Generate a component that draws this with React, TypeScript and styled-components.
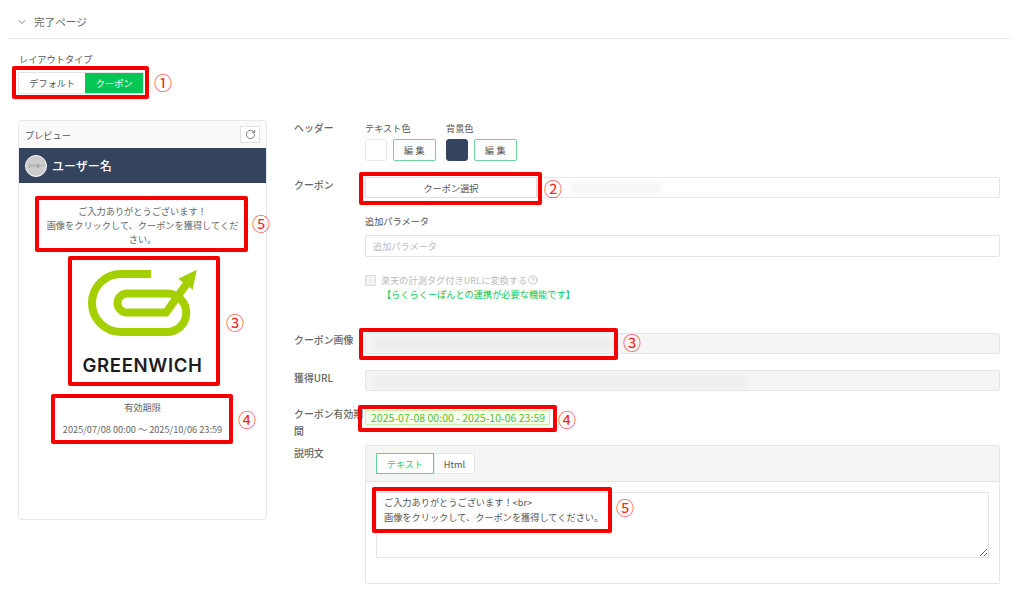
import React from "react";
import styled, { createGlobalStyle } from "styled-components";
import { ChevronDown, RotateCw, CircleHelp } from "lucide-react";

const Global = createGlobalStyle`
  html, body { margin: 0; padding: 0; background: #fff; }
  body { font-family: "Noto Sans CJK JP", "Noto Sans", sans-serif; color: #555; overflow: hidden; }
  * { box-sizing: border-box; }
`;

const Page = styled.div`
  position: relative;
  width: 1024px;
  height: 605px;
  overflow: hidden;
  font-size: 9.2px;
  line-height: 16px;
`;

const SectionBar = styled.div`
  height: 39px;
  margin: 0 14px 0 8px;
  padding: 6px 0 0 8px;
  display: flex;
  align-items: center;
  gap: 6px;
  border-bottom: 1px solid #e6e6e6;
  font-size: 10.6px;
  color: #666;
`;

const LayoutBlock = styled.div`
  padding: 12px 0 0 19px;
`;

const SmallLabel = styled.div`
  color: #555;
  line-height: 16px;
`;

const Toggle = styled.div`
  display: flex;
  width: 126px;
  height: 22px;
  margin: 5px 0 0 -1px;
  border: 1px solid #e4e4e4;
`;

const ToggleItem = styled.div<{ $on?: boolean; $w: number }>`
  width: ${(p) => p.$w}px;
  display: flex;
  align-items: center;
  justify-content: center;
  background: ${(p) => (p.$on ? "#06c755" : "#fff")};
  color: ${(p) => (p.$on ? "#fff" : "#555")};
`;

const Columns = styled.div`
  display: flex;
  margin-top: 26px;
  padding-left: 18px;
`;

const PreviewCard = styled.div`
  width: 249px;
  height: 400px;
  border: 1px solid #e8e8e8;
  border-radius: 3px;
  flex: none;
  overflow: hidden;
`;

const PreviewHead = styled.div`
  height: 27px;
  padding: 0 6px 0 6px;
  display: flex;
  align-items: center;
  justify-content: space-between;
  background: #fafafa;
`;

const IconButton = styled.div`
  width: 20px;
  height: 17px;
  display: flex;
  align-items: center;
  justify-content: center;
  background: #fff;
  border: 1px solid #e2e2e2;
  color: #555;
`;

const NavBar = styled.div`
  height: 35px;
  background: #34435e;
  display: flex;
  align-items: center;
  padding-left: 6px;
  gap: 5px;
  color: #fff;
  font-size: 12px;
  font-weight: 500;
`;

const Avatar = styled.div`
  width: 22px;
  height: 22px;
  border-radius: 50%;
  background: #ccc;
  border: 1.5px solid #fff;
  color: #666;
  font-size: 4px;
  font-weight: 400;
  display: flex;
  align-items: center;
  justify-content: center;
  white-space: nowrap;
  overflow: hidden;
`;

const PreviewBody = styled.div`
  padding: 21px 24px 0;
  text-align: center;
  line-height: 14px;
  color: #666;
`;

const LogoBox = styled.div`
  margin-top: 17px;
  display: flex;
  flex-direction: column;
  align-items: center;
`;

const LogoWord = styled.div`
  font-family: "Inter", "Liberation Sans", sans-serif;
  font-weight: 600;
  font-size: 18.6px;
  line-height: 20px;
  letter-spacing: 0.65px;
  color: #1c1c1c;
  margin-top: 16px;
`;

const Validity = styled.div`
  margin-top: 25px;
  white-space: nowrap;
`;

const ValidityDates = styled.div`
  margin-top: 8px;
`;

const Form = styled.div`
  margin-left: 27px;
  width: 706px;
`;

const Row = styled.div<{ $mt?: number }>`
  display: grid;
  grid-template-columns: 71px 1fr;
  margin-top: ${(p) => p.$mt ?? 0}px;
  color: #555;
`;

const RowLabel = styled.div<{ $mt?: number }>`
  margin-top: ${(p) => p.$mt ?? 0}px;
  font-size: 9.9px;
  line-height: 17px;
  font-weight: 500;
  color: #666;
`;

const ColorGroups = styled.div`
  display: flex;
  gap: 10px;
`;

const ColorGroup = styled.div``;

const ColorControls = styled.div`
  display: flex;
  gap: 6px;
  margin-top: 3px;
`;

const Swatch = styled.div<{ $c: string }>`
  width: 22px;
  height: 22px;
  border-radius: 3px;
  background: ${(p) => p.$c};
  border: 1px solid ${(p) => (p.$c === "#fff" ? "#e8e8e8" : p.$c)};
`;

const EditButton = styled.div`
  width: 43px;
  height: 22px;
  border: 1px solid #6fd69a;
  border-radius: 2px;
  display: flex;
  align-items: center;
  justify-content: center;
  letter-spacing: 2.5px;
  padding-left: 2px;
  color: #555;
  background: #fff;
`;

const CouponLine = styled.div`
  display: flex;
  height: 21px;
`;

const SelectButton = styled.div`
  width: 172px;
  flex: none;
  display: flex;
  align-items: center;
  justify-content: center;
  border: 1px solid #e0e0e0;
  background: #fff;
  color: #555;
`;

const Field = styled.div<{ $disabled?: boolean }>`
  flex: 1;
  height: 21px;
  display: flex;
  align-items: center;
  padding-left: 7px;
  border: 1px solid #e6e6e6;
  border-radius: 2px;
  background: ${(p) => (p.$disabled ? "#f5f5f5" : "#fff")};
  overflow: hidden;
`;

const Smudge = styled.div<{ $w: number; $ml?: number; $c?: string }>`
  width: ${(p) => p.$w}px;
  height: 12px;
  margin-left: ${(p) => p.$ml ?? 0}px;
  background: ${(p) => p.$c ?? "#ededed"};
  filter: blur(2px);
`;

const SubLabel = styled.div`
  margin-top: 15px;
  height: 16px;
`;

const TextInput = styled.input`
  display: block;
  width: 100%;
  height: 22px;
  margin-top: 6px;
  padding: 0 7px;
  border: 1px solid #e4e4e4;
  border-radius: 2px;
  font: inherit;
  outline: none;
  &::placeholder { color: #bdbdbd; opacity: 1; }
`;

const CheckLine = styled.div`
  display: flex;
  align-items: center;
  gap: 5px;
  height: 16px;
  margin-top: 15px;
  color: #bbb;
`;

const Check = styled.div`
  width: 11px;
  height: 11px;
  background: #f2f2f2;
  border: 1px solid #dcdcdc;
  border-radius: 1px;
`;

const CheckText = styled.span`
  display: inline-flex;
  align-items: center;
  gap: 1px;
`;

const GreenNote = styled.div`
  color: #06c755;
  margin: -2px 0 0 17px;
  font-size: 9.2px;
`;

const DateTag = styled.div`
  display: block;
  width: 185px;
  height: 15px;
  line-height: 13px;
  font-size: 10.55px;
  padding-left: 5px;
  white-space: nowrap;
  color: #62bb30;
  background: #f6ffed;
  border: 1px solid #c6eda6;
  border-radius: 1px;
`;

const Panel = styled.div`
  height: 139px;
  border: 1px solid #e6e6e6;
  border-radius: 2px;
`;

const PanelHead = styled.div`
  height: 36px;
  background: #f5f5f5;
  border-bottom: 1px solid #e6e6e6;
  padding: 7px 0 0 10px;
  display: flex;
`;

const Tab = styled.div<{ $on?: boolean; $w: number }>`
  width: ${(p) => p.$w}px;
  height: 21px;
  display: flex;
  align-items: center;
  justify-content: center;
  background: #fff;
  border: 1px solid ${(p) => (p.$on ? "#5fd492" : "#e6e6e6")};
  color: ${(p) => (p.$on ? "#2ecb73" : "#555")};
`;

const Area = styled.textarea`
  display: block;
  width: 613px;
  height: 66px;
  margin: 10px 0 0 10px;
  padding: 2px 7px;
  border: 1px solid #e4e4e4;
  border-radius: 1px;
  font: inherit;
  line-height: 15px;
  color: #555;
  resize: vertical;
  outline: none;
`;

const RedBox = styled.div<{ $x: number; $y: number; $w: number; $h: number }>`
  position: absolute;
  left: ${(p) => p.$x}px;
  top: ${(p) => p.$y}px;
  width: ${(p) => p.$w}px;
  height: ${(p) => p.$h}px;
  border: 4px solid #f50000;
  border-radius: 2px;
  pointer-events: none;
`;

const Mark = styled.div<{ $x: number; $y: number }>`
  position: absolute;
  left: ${(p) => p.$x}px;
  top: ${(p) => p.$y}px;
  width: 20px;
  height: 20px;
  transform: translate(-50%, -50%);
  display: flex;
  align-items: center;
  justify-content: center;
  font-size: 18px;
  line-height: 20px;
  color: #f22;
`;

const boxes = [
  [12, 66, 137, 33],
  [35, 196, 213, 56],
  [68, 256, 152, 130],
  [51, 394, 182, 50],
  [359, 172, 183, 33],
  [359, 328, 259, 32],
  [358, 405, 199, 27],
  [372, 487, 240, 46],
];

const marks: [string, number, number][] = [
  ["①", 163, 82],
  ["⑤", 261, 223],
  ["③", 235, 322],
  ["④", 247, 419],
  ["②", 553, 188],
  ["③", 632, 342],
  ["④", 567, 419],
  ["⑤", 625, 507],
];

const GreenwichMark = () => (
  <svg width="125" height="76" viewBox="80 265 125 76" fill="none">
    <path
      d="M151 276H121A29 29 0 0 0 121 334H167A19.2 19.2 0 0 0 167 295.5H127A9.5 9.5 0 0 0 127 314.5H166L188 284"
      stroke="#a4d000"
      strokeWidth="8"
    />
    <path d="M196.7 271.7L178.3 280.7L192.7 291.7Z" fill="#a4d000" />
  </svg>
);

export default function App() {
  return (
    <Page>
      <Global />
      <SectionBar>
        <ChevronDown size={12} strokeWidth={1.6} />
        完了ページ
      </SectionBar>
      <LayoutBlock>
        <SmallLabel>レイアウトタイプ</SmallLabel>
        <Toggle>
          <ToggleItem $w={67}>デフォルト</ToggleItem>
          <ToggleItem $w={58} $on>クーポン</ToggleItem>
        </Toggle>
      </LayoutBlock>
      <Columns>
        <PreviewCard>
          <PreviewHead>
            プレビュー
            <IconButton>
              <RotateCw size={11} strokeWidth={1.6} />
            </IconButton>
          </PreviewHead>
          <NavBar>
            <Avatar>アバター</Avatar>
            ユーザー名
          </NavBar>
          <PreviewBody>
            ご入力ありがとうございます！
            <br />
            画像をクリックして、クーポンを獲得してください。
            <LogoBox>
              <GreenwichMark />
              <LogoWord>GREENWICH</LogoWord>
            </LogoBox>
            <Validity>
              有効期限
              <ValidityDates>2025/07/08 00:00 〜 2025/10/06 23:59</ValidityDates>
            </Validity>
          </PreviewBody>
        </PreviewCard>
        <Form>
          <Row>
            <RowLabel>ヘッダー</RowLabel>
            <ColorGroups>
              <ColorGroup>
                テキスト色
                <ColorControls>
                  <Swatch $c="#fff" />
                  <EditButton>編集</EditButton>
                </ColorControls>
              </ColorGroup>
              <ColorGroup>
                背景色
                <ColorControls>
                  <Swatch $c="#34435e" />
                  <EditButton>編集</EditButton>
                </ColorControls>
              </ColorGroup>
            </ColorGroups>
          </Row>
          <Row $mt={16}>
            <RowLabel>クーポン</RowLabel>
            <div>
              <CouponLine>
                <SelectButton>クーポン選択</SelectButton>
                <Field>
                  <Smudge $w={90} $ml={26} $c="#f6f6f6" />
                </Field>
              </CouponLine>
              <SubLabel>追加パラメータ</SubLabel>
              <TextInput placeholder="追加パラメータ" readOnly />
              <CheckLine>
                <Check />
                <CheckText>
                  楽天の計測タグ付きURLに変換する
                  <CircleHelp size={10} strokeWidth={1.4} color="#999" />
                </CheckText>
              </CheckLine>
              <GreenNote>【らくらくーぽんとの連携が必要な機能です】</GreenNote>
            </div>
          </Row>
          <Row $mt={31}>
            <RowLabel $mt={-1}>クーポン画像</RowLabel>
            <Field $disabled>
              <Smudge $w={240} />
            </Field>
          </Row>
          <Row $mt={16}>
            <RowLabel>獲得URL</RowLabel>
            <Field $disabled>
              <Smudge $w={374} />
            </Field>
          </Row>
          <Row $mt={19}>
            <RowLabel $mt={-4}>クーポン有効期間</RowLabel>
            <DateTag>2025-07-08 00:00 - 2025-10-06 23:59</DateTag>
          </Row>
          <Row $mt={5}>
            <RowLabel>説明文</RowLabel>
            <Panel>
              <PanelHead>
                <Tab $w={58} $on>テキスト</Tab>
                <Tab $w={41}>Html</Tab>
              </PanelHead>
              <Area
                readOnly
                defaultValue={"ご入力ありがとうございます！<br>\n画像をクリックして、クーポンを獲得してください。"}
              />
            </Panel>
          </Row>
        </Form>
      </Columns>
      {boxes.map(([x, y, w, h]) => (
        <RedBox key={`${x}-${y}`} $x={x} $y={y} $w={w} $h={h} />
      ))}
      {marks.map(([t, x, y]) => (
        <Mark key={`${x}-${y}`} $x={x} $y={y}>{t}</Mark>
      ))}
    </Page>
  );
}
